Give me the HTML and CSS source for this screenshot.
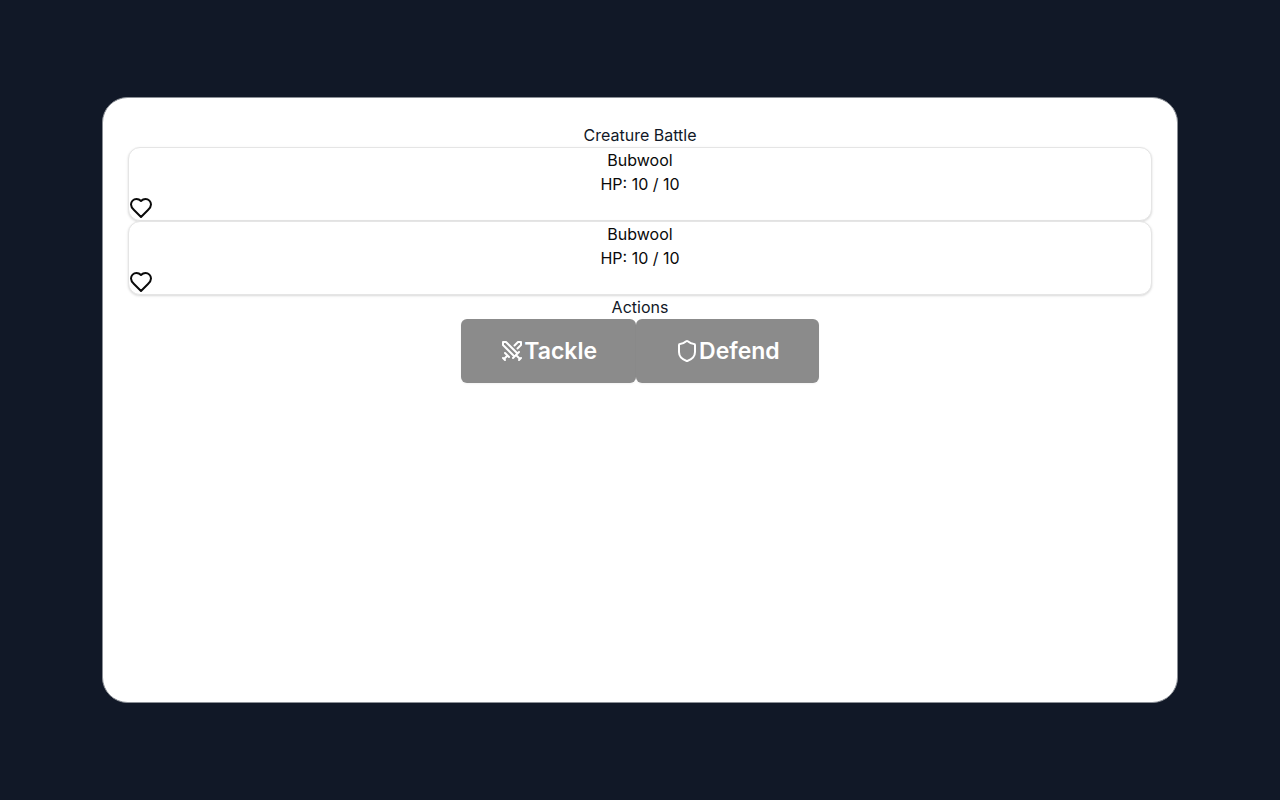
FILE: index.html
```html
<!DOCTYPE html>
<html lang="en">
<head>
<meta charset="utf-8">
<meta name="viewport" content="width=device-width, initial-scale=1">
<title>Creature Battle</title>
<link rel="stylesheet" href="styles.css">
</head>
<body>
<main class="panel">
  <h1 class="heading">Creature Battle</h1>
  <section class="card">
    <h2 class="heading">Bubwool</h2>
    <p class="hp">HP: 10 / 10</p>
    <svg class="icon" viewBox="0 0 24 24" aria-hidden="true"><path d="M19 14c1.49-1.46 3-3.21 3-5.5A5.5 5.5 0 0 0 16.5 3c-1.76 0-3 .5-4.5 2-1.5-1.5-2.74-2-4.5-2A5.5 5.5 0 0 0 2 8.5c0 2.3 1.5 4.05 3 5.5l7 7Z"/></svg>
  </section>
  <section class="card">
    <h2 class="heading">Bubwool</h2>
    <p class="hp">HP: 10 / 10</p>
    <svg class="icon" viewBox="0 0 24 24" aria-hidden="true"><path d="M19 14c1.49-1.46 3-3.21 3-5.5A5.5 5.5 0 0 0 16.5 3c-1.76 0-3 .5-4.5 2-1.5-1.5-2.74-2-4.5-2A5.5 5.5 0 0 0 2 8.5c0 2.3 1.5 4.05 3 5.5l7 7Z"/></svg>
  </section>
  <h2 class="heading">Actions</h2>
  <div class="actions">
    <button class="action" type="button">
      <svg class="icon" viewBox="0 0 24 24" aria-hidden="true"><path d="M14.5 17.5 3 6V3h3l11.5 11.5M13 19l6-6M16 16l4 4M19 21l2-2M14.5 6.5 18 3h3v3l-3.5 3.5M5 14l4 4M7 17l-3 3M3 19l2 2"/></svg>
      <span>Tackle</span>
    </button>
    <button class="action" type="button">
      <svg class="icon" viewBox="0 0 24 24" aria-hidden="true"><path d="M20 13c0 5-3.5 7.5-7.66 8.95a1 1 0 0 1-.67-.01C7.5 20.5 4 18 4 13V6a1 1 0 0 1 1-1c2 0 4.500-1.200 6.240-2.720a1.170 1.170 0 0 1 1.520 0C14.510 3.810 17 5 19 5a1 1 0 0 1 1 1z"/></svg>
      <span>Defend</span>
    </button>
  </div>
</main>
</body>
</html>
```
FILE: styles.css
```css
*, *::before, *::after {
  box-sizing: border-box;
}

body {
  margin: 0;
  min-height: 100vh;
  display: flex;
  align-items: center;
  justify-content: center;
  background: #111827;
  color: #111827;
  font: 16px/24px Inter, "Liberation Sans", sans-serif;
}

.panel {
  width: 84vw;
  min-height: calc(47.25vw + 2px);
  padding: 2vw calc(2vw - 1px);
  border: 1px solid #8b8f96;
  border-radius: 2vw;
  background: #fff;
  text-align: center;
}

.heading, .hp {
  margin: 0;
  font: inherit;
}

.card {
  border: 1px solid #e5e5e5;
  border-radius: 12px;
  background: #fff;
  color: #0a0a0a;
  box-shadow: 0 1px 3px rgb(0 0 0 / 10%), 0 1px 2px rgb(0 0 0 / 6%);
}

.icon {
  display: block;
  width: 24px;
  height: 24px;
  flex: none;
  fill: none;
  stroke: currentColor;
  stroke-width: 2;
  stroke-linecap: round;
  stroke-linejoin: round;
}

.actions {
  display: flex;
  justify-content: center;
}

.action {
  display: flex;
  align-items: center;
  height: 64px;
  padding: 0 39px;
  border: 0;
  border-radius: 6px;
  background: #8b8b8b;
  color: #fff;
  box-shadow: 0 1px 2px rgb(0 0 0 / 5%);
  font: 600 23px/32px Inter, "Liberation Sans", sans-serif;
}
```
